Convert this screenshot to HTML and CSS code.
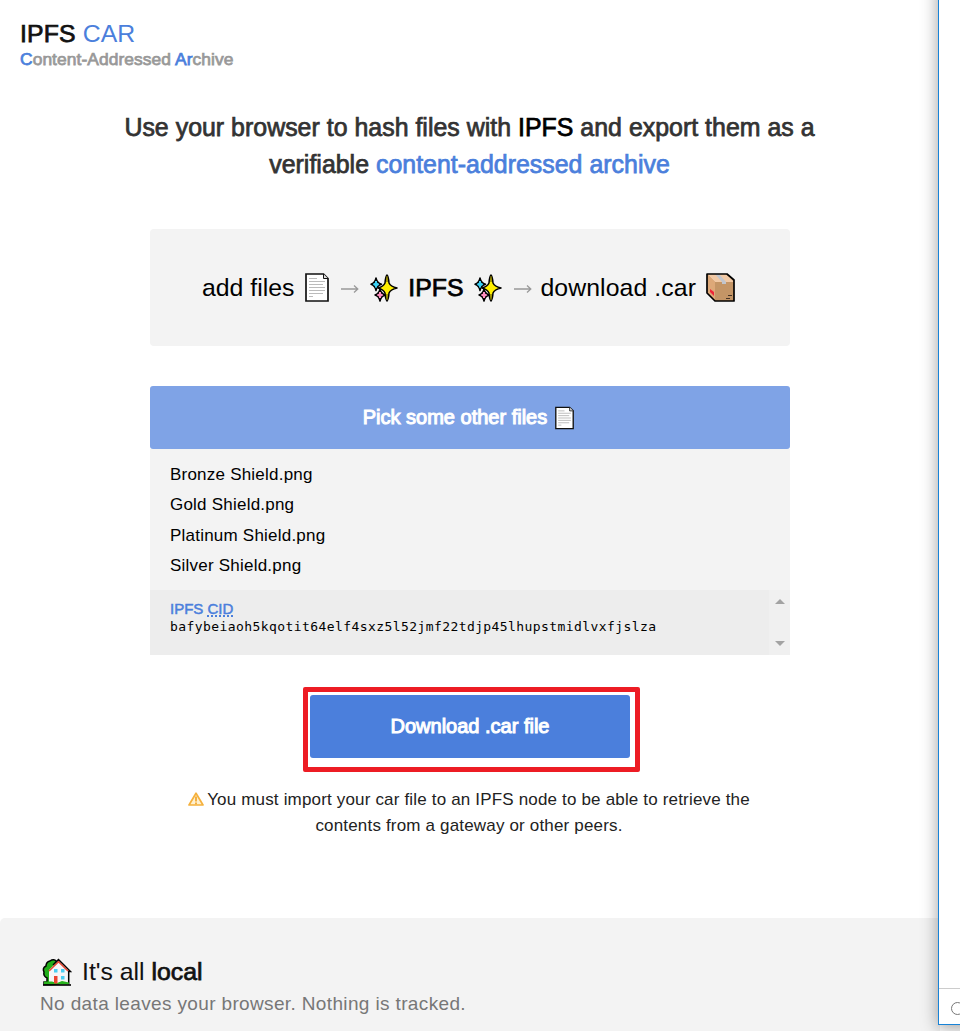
FILE: index.html
```html
<!DOCTYPE html>
<html lang="en">
<head>
<meta charset="utf-8">
<title>IPFS CAR</title>
<link rel="stylesheet" href="styles.css">
</head>
<body>
<svg class="defs" width="0" height="0" aria-hidden="true">
  <symbol id="page" viewBox="0 0 24 29">
    <path d="M1 1H18.5L23 5.5V28H1Z" fill="#fff" stroke="#111" stroke-width="1.7"/>
    <path d="M18.5 1V5.5H23" fill="#ddd" stroke="#111" stroke-width="1"/>
    <path d="M4 5.5H12M4 8.5H20M4 11.5H18M4 14.5H20M4 17.5H20M4 20.5H18M4 23.5H8" stroke="#bbb" stroke-width="1.2"/>
  </symbol>
  <symbol id="arrow" viewBox="0 0 18 10">
    <path d="M0 5H17M13 1.5L16.8 5L13 8.5" fill="none" stroke="#999" stroke-width="1.3"/>
  </symbol>
  <symbol id="sparkles" viewBox="0 0 28 28">
    <g stroke="#000" stroke-width="1.5" stroke-linejoin="round">
      <path d="M6 4Q7 9 11.5 10.3Q7 11.6 6 16.5Q5 11.6 1 10.3Q5 9 6 4Z" fill="#3bd0f5"/>
      <path d="M10 15Q11 20 15.5 21Q11 22 10 27Q9 22 5 21Q9 20 10 15Z" fill="#ff8fc0"/>
      <path d="M17 1Q18.6 3 19 9Q20.5 12.5 27 14Q20.5 15.5 19 19Q18.6 25 17 27Q15.4 25 15 19Q13.5 15.5 8 14Q13.5 12.5 15 9Q15.4 3 17 1Z" fill="#ffef00"/>
    </g>
    <path d="M17 2V8M17 20V26" stroke="#756b00" stroke-width="1.3"/>
    <path d="M6 7V13.5M3.5 10.3H8.5" stroke="#3bd0f5" stroke-width="2"/>
    <path d="M10 18V24M7.5 21H12.5" stroke="#ff8fc0" stroke-width="2"/>
  </symbol>
  <symbol id="parcel" viewBox="0 0 29 29">
    <path d="M1 1H21L28 8V28H9L1 20Z" fill="#c49566"/>
    <path d="M1 1H21L28 9H9Z" fill="#f1c9a5"/>
    <path d="M1 1L9 9V28L1 20Z" fill="#dda878"/>
    <path d="M9 1H13L20 9V11H16V9Z" fill="#c2c5cc"/>
    <path d="M4 16L8 19V23L4 19Z" fill="#ef2639"/>
    <path d="M22 22.5H26M20 25.5H24" stroke="#463426" stroke-width="1"/>
    <path d="M1 1H21L28 7V28H9L1 20Z" fill="none" stroke="#000" stroke-width="1.7" stroke-linejoin="round"/>
  </symbol>
</svg>

<div class="page">
  <header class="brand">
    <div class="logo"><span class="semi dark">IPFS</span> <span class="blue">CAR</span></div>
    <div class="tagline semi"><span class="blue">C</span>ontent-Addressed <span class="blue">Ar</span>chive</div>
  </header>

  <main class="main">
    <h1 class="title semi">Use your browser to hash files with <span class="black">IPFS</span> and export them as a<br>verifiable <span class="blue">content-addressed archive</span></h1>

    <section class="flow">
      <span>add files</span>
      <svg class="doc"><use href="#page"/></svg>
      <svg class="arrow"><use href="#arrow"/></svg>
      <svg class="spark"><use href="#sparkles"/></svg>
      <span class="semi flow-name">IPFS</span>
      <svg class="spark"><use href="#sparkles"/></svg>
      <svg class="arrow"><use href="#arrow"/></svg>
      <span class="flow-end">download .car</span>
      <svg class="box"><use href="#parcel"/></svg>
    </section>

    <section class="files">
      <button class="button pick">Pick some other files <svg class="pick-doc"><use href="#page"/></svg></button>
      <ul class="list">
        <li>Bronze Shield.png</li>
        <li>Gold Shield.png</li>
        <li>Platinum Shield.png</li>
        <li>Silver Shield.png</li>
      </ul>
      <div class="cid">
        <div class="cid-body">
          <div class="cid-label">IPFS <abbr class="abbr">CID</abbr></div>
          <code class="cid-value">bafybeiaoh5kqotit64elf4sxz5l52jmf22tdjp45lhupstmidlvxfjslza</code>
        </div>
        <div class="scroll"><i class="up"></i><i class="down"></i></div>
      </div>
    </section>

    <div class="highlight"><button class="button download">Download .car file</button></div>

    <p class="note"><svg class="warn" viewBox="0 0 16 14"><path d="M8 1.2L15 13H1Z" fill="#fff0cf" stroke="#f5b13d" stroke-width="1.7" stroke-linejoin="round"/><path d="M8 4.5V9.5M8 10.5V12.3" stroke="#f0a52a" stroke-width="1.7"/></svg>You must import your car file to an IPFS node to be able to retrieve the<br>contents from a gateway or other peers.</p>
  </main>

  <footer class="footer">
    <div class="local">
      <svg class="house" viewBox="0 0 30 28">
        <path d="M8 26.5H2V24H5V20Q1 18 2 14Q0 10 4 8Q4 4 8 3Q12 0 15 4L17 8V26Z" fill="#20ad18" stroke="#000" stroke-width="1.5"/>
        <path d="M7 26V12L16.5 2.5L27 12V26Z" fill="#f7f5f7"/>
        <path d="M11 7L16.5 1.6L28.5 13.5H26.7V26.5" fill="none" stroke="#000" stroke-width="1.5"/>
        <path d="M7 13L16.5 3.8L26 13" fill="none" stroke="#e84a35" stroke-width="1.6"/>
        <path d="M2 23.5H10L15 25L20 23L27 24.5V26.5H2Z" fill="#28b31c"/>
        <path d="M1 27H29" stroke="#000" stroke-width="1.6"/>
        <path d="M12 18H15.5V25.5H12Z" fill="#ec4432"/>
        <path d="M12 11H15.5V14.5H12ZM19 11H22.5V14.5H19ZM19 18H22.5V21.5H19Z" fill="#4bcdf2"/>
      </svg>
      <span>It's all <span class="semi">local</span></span>
    </div>
    <div class="privacy">No data leaves your browser. Nothing is tracked.</div>
  </footer>
</div>

<aside class="window">
  <div class="window-bar"><span class="ring"></span></div>
</aside>
</body>
</html>
```
FILE: styles.css
```css
* { box-sizing: border-box; }

body {
  margin: 0;
  width: 960px;
  height: 1031px;
  overflow: hidden;
  position: relative;
  background: #fff;
  color: #000;
  font-family: "Liberation Sans", Arial, sans-serif;
}

.defs { position: absolute; }
.page { width: 940px; height: 1031px; display: flex; flex-direction: column; }
.semi { font-weight: 400; -webkit-text-stroke: 0.75px currentColor; }
.blue { color: #4b7fdc; }
.dark { color: #111; }
.black { color: #000; }

.brand { padding: 19px 20px 0; height: 109px; }
.logo { font-size: 24.8px; line-height: 29px; letter-spacing: 0.12px; }
.tagline { font-size: 17.4px; line-height: 22px; letter-spacing: 0.07px; color: #999; }

.main { display: flex; flex-direction: column; align-items: center; height: 809px; }
.title {
  margin: 0;
  padding-right: 1px;
  font-size: 24.9px;
  line-height: 37px;
  letter-spacing: 0.02px;
  color: #333;
  text-align: center;
  white-space: nowrap;
}

.flow {
  width: 640px;
  height: 117px;
  margin-top: 46px;
  padding-left: 52px;
  display: flex;
  align-items: center;
  background: #f3f3f3;
  border-radius: 4px;
  font-size: 24.8px;
  white-space: nowrap;
}
.doc { width: 24px; height: 29px; margin-left: 11px; }
.arrow { width: 18px; height: 10px; margin-left: 12px; margin-top: 3px; }
.spark { width: 28px; height: 28px; margin-left: 11px; }
.flow-name { margin-left: 10px; }
.flow-end { margin-left: 8px; letter-spacing: 0.09px; }
.box { width: 29px; height: 29px; margin-left: 10px; }

.files { width: 640px; margin-top: 40px; }
.button {
  display: flex;
  align-items: center;
  justify-content: center;
  border: 0;
  border-radius: 3px;
  height: 63px;
  padding: 0;
  color: #fff;
  font-family: inherit;
  font-size: 20px;
  -webkit-text-stroke: 1px #fff;
}
.pick { width: 640px; padding-right: 3px; background: #7fa3e6; }
.pick-doc { width: 19px; height: 24px; margin-left: 8px; }

.list {
  list-style: none;
  margin: 0;
  padding: 11px 20px 0;
  height: 141px;
  background: #f3f3f3;
  font-size: 17px;
  line-height: 30.3px;
  letter-spacing: 0.22px;
}

.cid { display: flex; height: 65px; background: #ededed; }
.cid-body { flex: 1; padding: 10px 0 0 20px; }
.cid-label { font-size: 15px; line-height: 18px; color: #4b7fdc; -webkit-text-stroke: 0.5px #4b7fdc; }
.abbr { text-decoration: underline dotted 1.5px; text-underline-offset: 1px; }
.cid-value { display: block; font: 13px/17px "DejaVu Sans Mono", monospace; letter-spacing: 0.42px; }
.scroll {
  width: 21px;
  background: #f0f0f0;
  display: flex;
  flex-direction: column;
  align-items: center;
  justify-content: space-between;
  padding: 9px 0;
}
.up, .down { width: 0; height: 0; border: 5px solid transparent; border-top-width: 0; border-bottom: 5px solid #a3a3a3; }
.down { border-top: 5px solid #a3a3a3; border-bottom-width: 0; }

.highlight {
  width: 337px;
  height: 85px;
  margin: 32px 0 0 3px;
  padding: 3px 0 0 2px;
  border: 5px solid #ed1c24;
  border-radius: 2px;
}
.download { width: 320px; background: #4b7fdc; }

.note {
  margin: 15px 2px 0 0;
  text-align: center;
  color: #222;
  font-size: 17px;
  line-height: 26px;
  letter-spacing: 0.17px;
  white-space: nowrap;
}
.warn { width: 16px; height: 14px; margin-right: 3px; vertical-align: -1px; }

.footer { height: 113px; padding: 38px 40px 0; background: #f3f3f3; border-radius: 5px 0 0 0; }
.local { display: flex; align-items: center; gap: 10px; height: 32px; padding-left: 2px; font-size: 24.8px; color: #111; }
.house { width: 30px; height: 28px; }
.privacy { padding-top: 1px; font-size: 19px; line-height: 30px; letter-spacing: 0.36px; color: #777; }

/* Neighbouring window that lies over the right edge of the page */
.window {
  position: absolute;
  top: -20px;
  left: 938px;
  width: 60px;
  height: 1045px;
  display: flex;
  flex-direction: column;
  justify-content: flex-end;
  border: 1px solid #1883d7;
  background: #fff;
  box-shadow: 0 3px 16px rgba(0, 0, 0, 0.38);
}
.window-bar { height: 36px; border-top: 1px solid #ccc; padding: 13px 0 0 12px; }
.ring { display: block; width: 13px; height: 13px; border: 1.5px solid #777; border-radius: 50%; }
```
